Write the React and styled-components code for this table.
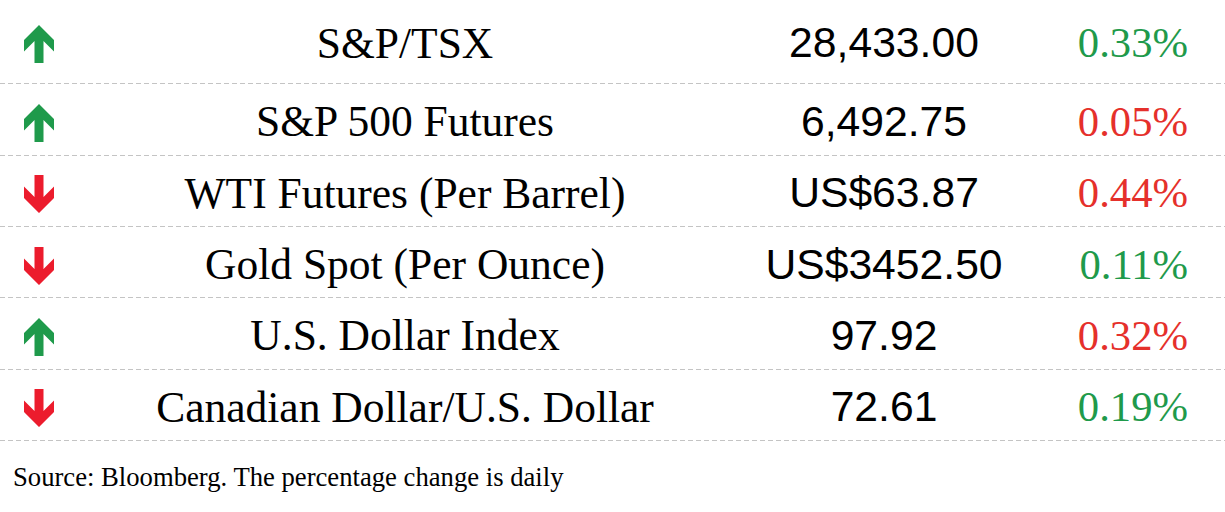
import React from 'react';
import styled, { createGlobalStyle } from 'styled-components';

const GlobalStyle = createGlobalStyle`
    html, body {
        margin: 0;
        padding: 0;
        background: #fff;
    }
    body {
        font-family: "Liberation Serif", "Times New Roman", serif;
        color: #000;
    }
`;

const GREEN = '#1f9a4b';
const RED = '#ec1c2d';
const TEXT_RED = '#e5302b';

const Table = styled.div`
    width: 1225px;
`;

const Row = styled.div`
    display: grid;
    grid-template-columns: 77px 656px 302px 1fr;
    align-items: center;
    box-sizing: border-box;
    height: ${props => props.first ? '84.33px' : '71.33px'};
    padding: ${props => props.first ? '2px 0 1px' : '4px 0 1px'};
    background: repeating-linear-gradient(to right, #c4c4c4 0 5px, transparent 5px 8px) left bottom / 100% 1px no-repeat;
`;

const ArrowCell = styled.div`
    display: flex;
    justify-content: center;
    padding-left: 1px;
    padding-top: 3px;
`;

const Name = styled.div`
    text-align: center;
    font-family: "Liberation Serif", "Times New Roman", serif;
    font-size: 43.5px;
    white-space: nowrap;
`;

const Value = styled.div`
    text-align: center;
    font-family: "Liberation Sans", Arial, sans-serif;
    font-size: 42.67px;
    white-space: nowrap;
`;

const Change = styled.div`
    text-align: right;
    padding-right: 37px;
    font-family: "Liberation Serif", "Times New Roman", serif;
    font-size: 42.67px;
    color: ${props => props.up ? GREEN : TEXT_RED};
    white-space: nowrap;
`;

const Source = styled.p`
    margin: 0;
    padding: 21px 13px;
    font-family: "Liberation Serif", "Times New Roman", serif;
    font-size: 26.67px;
`;

const Arrow = ({ up }) => (
    <svg width="30" height="38" viewBox="0 0 30 38"
        style={up ? undefined : { transform: 'rotate(180deg)' }}>
        <polygon
            fill={up ? GREEN : RED}
            points="15,0 30,15 30,26.5 19.5,16 19.5,38 10.5,38 10.5,16 0,26.5 0,15" />
    </svg>
);

const rows = [
    { up: true, name: 'S&P/TSX', value: '28,433.00', change: '0.33%', changeUp: true },
    { up: true, name: 'S&P 500 Futures', value: '6,492.75', change: '0.05%', changeUp: false },
    { up: false, name: 'WTI Futures (Per Barrel)', value: 'US$63.87', change: '0.44%', changeUp: false },
    { up: false, name: 'Gold Spot (Per Ounce)', value: 'US$3452.50', change: '0.11%', changeUp: true },
    { up: true, name: 'U.S. Dollar Index', value: '97.92', change: '0.32%', changeUp: false },
    { up: false, name: 'Canadian Dollar/U.S. Dollar', value: '72.61', change: '0.19%', changeUp: true },
];

export default function App() {
    return (
        <>
            <GlobalStyle />
            <Table>
                {rows.map((r, i) => (
                    <Row key={r.name} first={i === 0}>
                        <ArrowCell><Arrow up={r.up} /></ArrowCell>
                        <Name>{r.name}</Name>
                        <Value>{r.value}</Value>
                        <Change up={r.changeUp}>{r.change}</Change>
                    </Row>
                ))}
            </Table>
            <Source>Source: Bloomberg. The percentage change is daily</Source>
        </>
    );
}
